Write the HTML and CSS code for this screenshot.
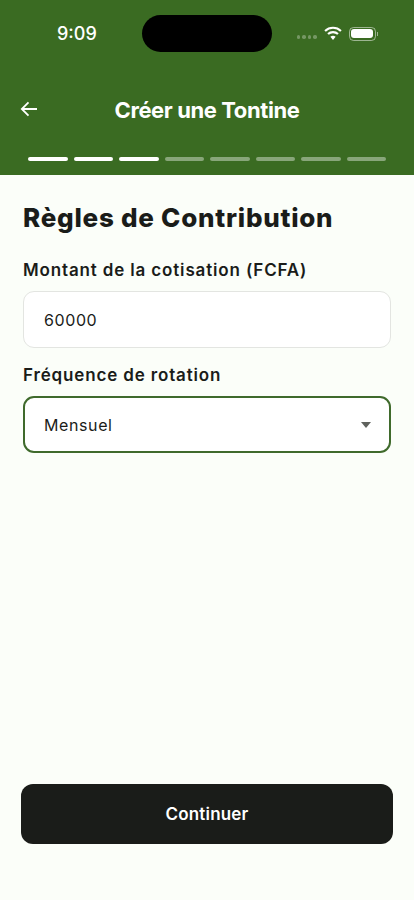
FILE: index.html
```html
<!DOCTYPE html>
<html lang="fr">
<head>
    <meta charset="UTF-8">
    <meta name="viewport" content="width=device-width, initial-scale=1.0">
    <title>Créer une Tontine</title>
    <link rel="stylesheet" href="styles.css">
</head>
<body>
    <div class="header">
        <div class="status-bar">
            <div class="status-time">9:09</div>
            <div class="island"></div>
            <div class="status-icons">
                <div class="signal"><span></span><span></span><span></span><span></span></div>
                <svg class="wifi" width="18" height="14" viewBox="0 0 17 13">
                    <path d="M1 4.600C5.200 .6 11.800 .6 16 4.600" fill="none" stroke="#fff" stroke-width="2"/>
                    <path d="M3.800 7.500C6.400 5 10.600 5 13.200 7.500" fill="none" stroke="#fff" stroke-width="2"/>
                    <path d="M6 10.100 8.500 13 11 10.100C9.600 8.900 7.400 8.900 6 10.100Z" fill="#fff"/>
                </svg>
                <div class="battery"><div class="battery-level"></div></div>
                <div class="battery-cap"></div>
            </div>
        </div>
        <div class="title-row">
            <svg class="back" width="18" height="16" viewBox="0 0 18 16">
                <path d="M17 8H2M8.500 1.300 1.800 8l6.700 6.700" fill="none" stroke="#fff" stroke-width="1.800"/>
            </svg>
            <h1>Créer une Tontine</h1>
        </div>
        <div class="steps">
            <span class="step done"></span>
            <span class="step done"></span>
            <span class="step done"></span>
            <span class="step"></span>
            <span class="step"></span>
            <span class="step"></span>
            <span class="step"></span>
            <span class="step"></span>
        </div>
    </div>

    <div class="main-content">
        <h2>Règles de Contribution</h2>
        <label class="field-label">Montant de la cotisation (FCFA)</label>
        <div class="field">60000</div>
        <label class="field-label second">Fréquence de rotation</label>
        <div class="field focused">
            <span>Mensuel</span>
            <span class="caret"></span>
        </div>
    </div>

    <div class="footer">
        <button class="btn">Continuer</button>
    </div>
</body>
</html>
```

FILE: styles.css
```css
* { margin: 0; padding: 0; box-sizing: border-box; }
body {
    font-family: Inter, 'Liberation Sans', sans-serif;
    background: #fbfef9;
    color: #1a1c19;
    display: flex;
    flex-direction: column;
    height: 100vh;
}
.header {
    background: #3a6b22;
    height: 175px;
    padding-top: 15px;
    color: #fff;
}
.status-bar {
    display: grid;
    grid-template-columns: 1fr 130px 1fr;
    align-items: center;
    padding: 0 36px;
    height: 37px;
}
.status-time { font-size: 18px; font-weight: 500; margin-left: 21px; }
.island { height: 37px; background: #000; border-radius: 19px; }
.status-icons { display: flex; align-items: center; justify-content: flex-end; }
.signal { display: flex; gap: 2px; margin-right: 7px; margin-top: 7px; }
.signal span { width: 3.500px; height: 3.500px; border-radius: 50%; background: rgba(255, 255, 255, 0.3); }
.wifi { margin-right: 7px; margin-top: -2px; }
.battery {
    width: 27px; height: 14px;
    border: 1px solid rgba(255, 255, 255, 0.5);
    border-radius: 4.500px;
    padding: 1.500px;
}
.battery-level { height: 100%; background: #fff; border-radius: 3px; }
.battery-cap { width: 1.500px; height: 4px; background: rgba(255, 255, 255, 0.5); margin-left: 1px; }
.title-row {
    position: relative;
    margin-top: 38px;
    height: 40px;
    display: flex;
    align-items: center;
    justify-content: center;
}
.back { position: absolute; left: 20px; top: 11px; }
h1 { font-size: 22px; font-weight: 700; letter-spacing: -0.4px; }
.steps {
    display: flex;
    gap: 6px;
    padding: 0 28px;
    margin-top: 27px;
}
.step { flex: 1; height: 4px; border-radius: 2px; background: rgba(255, 255, 255, 0.4); }
.step.done { background: #fff; }
.main-content { flex-grow: 1; padding: 26px 23px 0; }
h2 { font-size: 26px; font-weight: 800; letter-spacing: 0.75px; line-height: 34px; }
.field-label { display: block; font-size: 17px; font-weight: 600; letter-spacing: 0.85px; line-height: 24px; margin-top: 23px; }
.field-label.second { margin-top: 15px; }
.field {
    display: flex;
    align-items: center;
    justify-content: space-between;
    height: 57px;
    margin-top: 9px;
    padding: 0 20px;
    background: #fff;
    border: 1px solid #e3e5e1;
    border-radius: 11px;
    font-size: 16px;
    letter-spacing: 0.6px;
}
.field.focused { border: 2px solid #3f6a2c; padding: 0 18px 0 19px; }
.caret {
    width: 0; height: 0;
    border-left: 5.500px solid transparent;
    border-right: 5.500px solid transparent;
    border-top: 6px solid #5f625d;
}
.footer { padding: 0 21px 56px; }
.btn {
    width: 100%;
    height: 60px;
    background: #1a1c19;
    color: #fff;
    border: none;
    border-radius: 12px;
    font-family: inherit;
    font-size: 17px;
    font-weight: 600;
    letter-spacing: 0.2px;
}
```
